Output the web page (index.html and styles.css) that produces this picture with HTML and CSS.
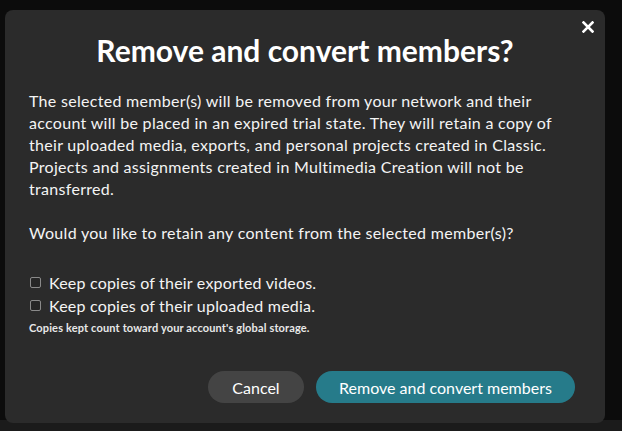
FILE: index.html
```html
<!DOCTYPE html>
<html lang="en">
<head>
    <meta charset="UTF-8">
    <meta name="viewport" content="width=device-width, initial-scale=1.0">
    <title>Remove and convert members</title>
    <link rel="stylesheet" href="styles.css">
</head>
<body>
    <div class="page">
        <div class="modal">
            <button class="close-button" type="button" aria-label="Close">
                <svg width="12" height="12" viewBox="0 0 12 12">
                    <path d="M1.5 1.5 L10.5 10.5 M10.5 1.5 L1.5 10.5" stroke="#fff" stroke-width="2.6" stroke-linecap="square"/>
                </svg>
            </button>
            <h1 class="title">Remove and convert members?</h1>
            <p class="text">
                The selected member(s) will be removed from your network and their
                account will be placed in an expired trial state. They will retain a copy of
                their uploaded media, exports, and personal projects created in Classic.
                Projects and assignments created in Multimedia Creation will not be
                transferred.
            </p>
            <p class="text question">Would you like to retain any content from the selected member(s)?</p>

            <div class="options">
                <label class="option"><input type="checkbox"><span>Keep copies of their exported videos.</span></label>
                <label class="option"><input type="checkbox"><span>Keep copies of their uploaded media.</span></label>
                <p class="note">Copies kept count toward your account's global storage.</p>
            </div>

            <div class="actions">
                <button class="btn btn-cancel" type="button">Cancel</button>
                <button class="btn btn-confirm" type="button">Remove and convert members</button>
            </div>
        </div>
        <div class="footer-strip"></div>
    </div>
</body>
</html>
```

FILE: styles.css
```css
html, body {
    margin: 0;
    padding: 0;
}
body {
    background-color: #0c0c0c;
    font-family: Lato, "Open Sans", sans-serif;
    color: #fff;
    width: 622px;
    height: 431px;
    overflow: hidden;
}
.page {
    position: relative;
    height: 431px;
}
.footer-strip {
    position: absolute;
    left: 0;
    right: 0;
    bottom: 0;
    height: 21px;
    background-color: #1b1b1b;
}
.modal {
    position: relative;
    z-index: 1;
    margin: 10px 0 0 5px;
    width: 600px;
    height: 413px;
    box-sizing: border-box;
    background-color: #2b2b2b;
    border-radius: 8px;
    padding: 22px 30px 20px 24px;
    display: flex;
    flex-direction: column;
}
.close-button {
    position: absolute;
    top: 11px;
    right: 11px;
    background: none;
    border: none;
    padding: 0;
    width: 12px;
    height: 12px;
    cursor: pointer;
    line-height: 0;
}
.title {
    margin: 0 0 22px;
    font-size: 30px;
    font-weight: 700;
    line-height: 36px;
    text-align: center;
    padding-left: 6px;
}
.text {
    margin: 0;
    font-size: 16px;
    letter-spacing: 0.3px;
    line-height: 22px;
    color: #f4f4f4;
}
.question {
    margin-top: 22px;
}
.options {
    margin-top: 27px;
}
.option {
    display: flex;
    align-items: center;
    height: 23px;
    font-size: 16px;
    letter-spacing: 0.2px;
    color: #f4f4f4;
}
.option input {
    appearance: none;
    margin: 0 8px 0 1px;
    width: 11px;
    height: 11px;
    border: 1px solid #8a8a8a;
    border-radius: 2px;
    background-color: #262626;
    box-sizing: border-box;
}
.note {
    margin: 4px 0 0;
    font-size: 11px;
    letter-spacing: 0.15px;
    font-weight: 700;
    color: #e8e8e8;
}
.actions {
    margin-top: auto;
    display: flex;
    justify-content: flex-end;
    gap: 12px;
}
.btn {
    height: 32px;
    border: none;
    border-radius: 16px;
    font-family: Lato, "Open Sans", sans-serif;
    font-size: 16px;
    color: #fff;
    cursor: pointer;
}
.btn-cancel {
    width: 96px;
    background-color: #444444;
}
.btn-confirm {
    width: 259px;
    background-color: #267b8a;
}
```
